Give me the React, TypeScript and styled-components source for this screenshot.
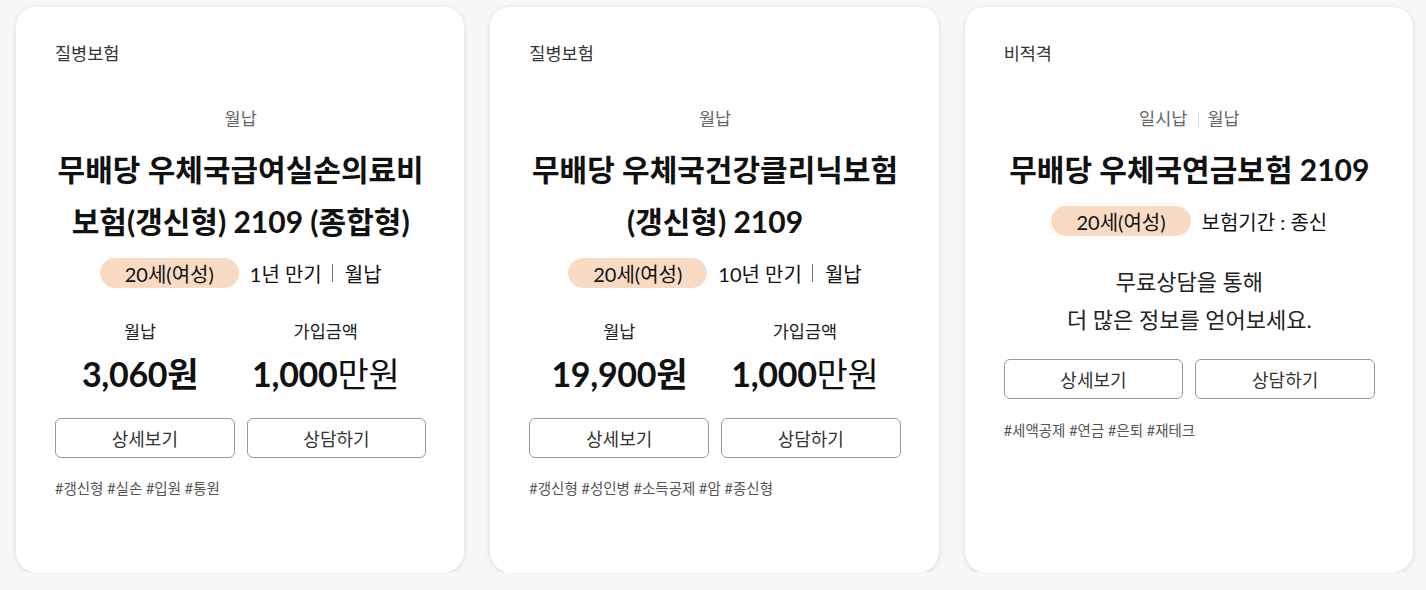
import React from "react";
import styled, { createGlobalStyle } from "styled-components";

const Global = createGlobalStyle`
  html, body { margin: 0; padding: 0; background: #f7f7f7; }
  body { font-family: Lato, "Noto Sans CJK KR", "Noto Sans", sans-serif; color: #111; }
  * { box-sizing: border-box; }
`;

const Grid = styled.div`
  display: grid;
  grid-template-columns: repeat(3, 1fr);
  gap: 26px;
  padding: 7px 13px 0 16px;
`;

const Card = styled.div`
  height: 565px;
  background: #fff;
  border-radius: 20px;
  box-shadow: 0 1px 5px rgba(0, 0, 0, 0.13);
  padding: 35px 38px 0 39px;
  display: flex;
  flex-direction: column;
`;

const Category = styled.div`
  font-size: 17.5px;
  line-height: 24px;
  color: #333;
`;

const PayTypes = styled.div`
  margin-top: 41px;
  display: flex;
  justify-content: center;
  align-items: center;
  font-size: 17.5px;
  line-height: 24px;
  color: #666;
`;

const LightDivider = styled.span`
  display: inline-block;
  width: 1px;
  height: 15px;
  background: #ddd;
  margin: 0 8px 0 11px;
`;

const Title = styled.h2`
  margin: 12px 0 0;
  font-size: 30px;
  line-height: 52px;
  font-weight: 700;
  text-align: center;
  color: #111;
`;

const InfoRow = styled.div`
  margin-top: 11px;
  display: flex;
  justify-content: center;
  align-items: center;
  font-size: 20px;
  color: #111;
`;

const Pill = styled.span`
  display: inline-flex;
  align-items: center;
  height: 30px;
  padding: 0 25px;
  border-radius: 15px;
  background: #f9dbc4;
  margin-right: 11px;
`;

const Divider = styled.span`
  display: inline-block;
  width: 1px;
  height: 18px;
  background: #777;
  margin: 0 12px 0 10px;
`;

const Stats = styled.div`
  margin-top: 32px;
  display: flex;
  justify-content: space-around;
`;

const Stat = styled.div`
  display: flex;
  flex-direction: column;
  align-items: center;
`;

const StatLabel = styled.div`
  font-size: 17.5px;
  line-height: 24px;
  color: #222;
`;

const StatValue = styled.div`
  margin-top: 8px;
  font-size: 34px;
  line-height: 44px;
  font-weight: 700;
  color: #111;
  letter-spacing: -0.3px;
`;

const Unit = styled.span`
  font-weight: 400;
`;

const Consult = styled.p`
  margin: 27px 0 0;
  font-size: 22px;
  line-height: 38px;
  text-align: center;
  color: #222;
`;

const Buttons = styled.div<{ $top: number }>`
  margin-top: ${(p) => p.$top}px;
  display: grid;
  grid-template-columns: 1fr 1fr;
  gap: 12px;
`;

const Button = styled.button`
  height: 40px;
  border: 1px solid #999;
  border-radius: 6px;
  background: #fff;
  font-family: inherit;
  font-size: 18px;
  color: #333;
  cursor: pointer;
`;

const Tags = styled.div<{ $top: number }>`
  margin-top: ${(p) => p.$top}px;
  font-size: 14.5px;
  line-height: 20px;
  color: #555;
`;

type Product = {
  category: string;
  payTypes: string[];
  title: React.ReactNode;
  info: string[];
  stats?: { pay: string; amount: string };
  tags: string;
};

const products: Product[] = [
  {
    category: "질병보험",
    payTypes: ["월납"],
    title: (
      <>
        무배당 우체국급여실손의료비
        <br />
        보험(갱신형) 2109 (종합형)
      </>
    ),
    info: ["1년 만기", "월납"],
    stats: { pay: "3,060원", amount: "1,000" },
    tags: "#갱신형 #실손 #입원 #통원",
  },
  {
    category: "질병보험",
    payTypes: ["월납"],
    title: (
      <>
        무배당 우체국건강클리닉보험
        <br />
        (갱신형) 2109
      </>
    ),
    info: ["10년 만기", "월납"],
    stats: { pay: "19,900원", amount: "1,000" },
    tags: "#갱신형 #성인병 #소득공제 #암 #종신형",
  },
  {
    category: "비적격",
    payTypes: ["일시납", "월납"],
    title: "무배당 우체국연금보험 2109",
    info: ["보험기간 : 종신"],
    tags: "#세액공제 #연금 #은퇴 #재테크",
  },
];

function ProductCard({ p }: { p: Product }) {
  return (
    <Card>
      <Category>{p.category}</Category>
      <PayTypes>
        {p.payTypes.map((t, i) => (
          <React.Fragment key={t}>
            {i > 0 && <LightDivider />}
            <span>{t}</span>
          </React.Fragment>
        ))}
      </PayTypes>
      <Title>{p.title}</Title>
      <InfoRow>
        <Pill>20세(여성)</Pill>
        {p.info.map((t, i) => (
          <React.Fragment key={t}>
            {i > 0 && <Divider />}
            <span>{t}</span>
          </React.Fragment>
        ))}
      </InfoRow>
      {p.stats ? (
        <>
          <Stats>
            <Stat>
              <StatLabel>월납</StatLabel>
              <StatValue>{p.stats.pay}</StatValue>
            </Stat>
            <Stat>
              <StatLabel>가입금액</StatLabel>
              <StatValue>
                {p.stats.amount}
                <Unit>만원</Unit>
              </StatValue>
            </Stat>
          </Stats>
          <Buttons $top={22}>
            <Button>상세보기</Button>
            <Button>상담하기</Button>
          </Buttons>
          <Tags $top={21}>{p.tags}</Tags>
        </>
      ) : (
        <>
          <Consult>
            무료상담을 통해
            <br />더 많은 정보를 얻어보세요.
          </Consult>
          <Buttons $top={20}>
            <Button>상세보기</Button>
            <Button>상담하기</Button>
          </Buttons>
          <Tags $top={22}>{p.tags}</Tags>
        </>
      )}
    </Card>
  );
}

export default function App() {
  return (
    <>
      <Global />
      <Grid>
        {products.map((p, i) => (
          <ProductCard key={i} p={p} />
        ))}
      </Grid>
    </>
  );
}
